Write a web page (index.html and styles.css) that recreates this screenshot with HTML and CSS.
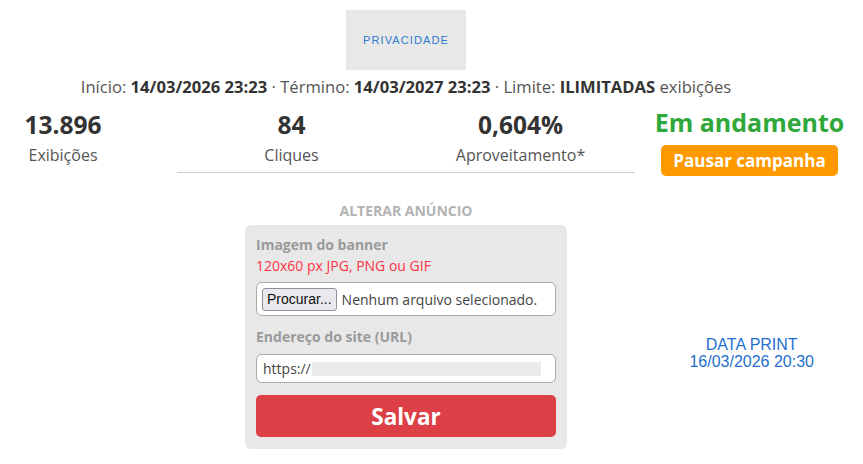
FILE: index.html
```html
<!DOCTYPE html>
<html lang="pt-BR">
<head>
<meta charset="utf-8">
<title>Campanha</title>
<link rel="stylesheet" href="styles.css">
</head>
<body>
<div class="page">
  <div class="banner"><span>PRIVACIDADE</span></div>
  <p class="info">Início: <b>14/03/2026 23:23</b> · Término: <b>14/03/2027 23:23</b> · Limite: <b>ILIMITADAS</b> exibições</p>
  <div class="stats">
    <div class="stat">
      <div class="num">13.896</div>
      <div class="lbl">Exibições</div>
    </div>
    <div class="stat line">
      <div class="num">84</div>
      <div class="lbl">Cliques</div>
    </div>
    <div class="stat line">
      <div class="num">0,604%</div>
      <div class="lbl">Aproveitamento*</div>
    </div>
    <div class="stat status">
      <div class="running">Em andamento</div>
      <button class="pause">Pausar campanha</button>
    </div>
  </div>
  <div class="lower">
    <div class="editor">
      <h3 class="title">ALTERAR ANÚNCIO</h3>
      <form class="card">
        <div class="field-label">Imagem do banner</div>
        <div class="hint">120x60 px JPG, PNG ou GIF</div>
        <div class="file-box"><span class="browse">Procurar...</span><span class="nofile">Nenhum arquivo selecionado.</span></div>
        <div class="field-label url-label">Endereço do site (URL)</div>
        <div class="url-box"><span>https://</span><span class="blur"></span></div>
        <button type="button" class="save">Salvar</button>
      </form>
    </div>
    <div class="print"><div>DATA PRINT</div><div>16/03/2026 20:30</div></div>
  </div>
</div>
</body>
</html>
```
FILE: styles.css
```css
* { box-sizing: border-box; }
html, body { margin: 0; padding: 0; background: #fff; }
body { font-family: "Open Sans", sans-serif; color: #555; overflow: hidden; }
.page { width: 812px; padding-top: 10px; }
.banner {
  width: 120px; height: 60px; margin: 0 auto;
  background: #e8e8e8;
  display: flex; align-items: center; justify-content: center;
}
.banner span {
  font-family: "Liberation Sans", Arial, sans-serif;
  font-size: 11px; letter-spacing: 1.1px; color: #2b7bd0;
}
.info {
  margin: 6px 0 0; text-align: center; font-size: 16.6px; line-height: 22px; color: #555;
}
.info b { color: #333; font-weight: 700; }
.stats {
  display: grid; grid-template-columns: 228px 229px 229px 229px;
  margin-left: -51px; margin-top: 11px;
}
.stat { text-align: center; height: 64px; }
.stat.line { border-bottom: 1px solid #cfcfcf; }
.num { font-size: 24.5px; font-weight: 700; color: #333; line-height: 32px; }
.lbl { font-size: 16px; color: #555; line-height: 28px; }
.running { font-size: 25px; font-weight: 700; color: #2fa83b; line-height: 26px; }
.pause {
  margin-top: 10px; width: 177px; height: 31px;
  background: #ff9900; color: #fff; border: 0; border-radius: 5px;
  font-family: "Open Sans", sans-serif; font-weight: 700; font-size: 17px;
  padding: 0;
}
.lower {
  display: grid; grid-template-columns: 1fr 322px 1fr; margin-top: 26px;
}
.editor { grid-column: 2; }
.title {
  margin: 0; text-align: center; font-size: 14px; font-weight: 700; color: #b3b3b3; line-height: 24px;
}
.card {
  margin: 2px 0 0; background: #e8e8e8; border-radius: 6px; padding: 10px 11px 12px;
}
.field-label { font-size: 14px; font-weight: 700; color: #9a9a9a; line-height: 20px; }
.hint { font-size: 14px; color: #ff3344; line-height: 22px; }
.file-box {
  margin-top: 5px; height: 34px; background: #fff; border: 1px solid #aaa; border-radius: 6px;
  display: flex; align-items: center; padding-left: 5px; gap: 5px;
}
.browse {
  font-family: "Liberation Sans", Arial, sans-serif; font-size: 14px; color: #111;
  background: #e9e9ed; border: 1px solid #8f8f9d; border-radius: 3px;
  height: 23px; line-height: 21px; padding: 0 4px;
}
.nofile { font-size: 14px; color: #444; }
.url-label { margin-top: 11px; }
.url-box {
  margin-top: 7px; height: 29px; background: #fff; border: 1px solid #aaa; border-radius: 6px;
  display: flex; align-items: center; padding-left: 6px; font-size: 14px; color: #444;
}
.blur { display: block; width: 229px; height: 14px; background: #ebebeb; margin-left: 1px; }
.save {
  margin-top: 12px; width: 100%; height: 42px; background: #dc3f45; color: #fff;
  border: 0; border-radius: 5px; font-family: "Open Sans", sans-serif;
  font-size: 22.5px; font-weight: 700; padding: 0; display: block;
}
.print {
  grid-column: 3; justify-self: end; margin-top: 137px; margin-right: -2px;
  font-family: "Liberation Sans", Arial, sans-serif; font-size: 16px; line-height: 17px;
  color: #1f6fcf; text-align: center;
}
```
